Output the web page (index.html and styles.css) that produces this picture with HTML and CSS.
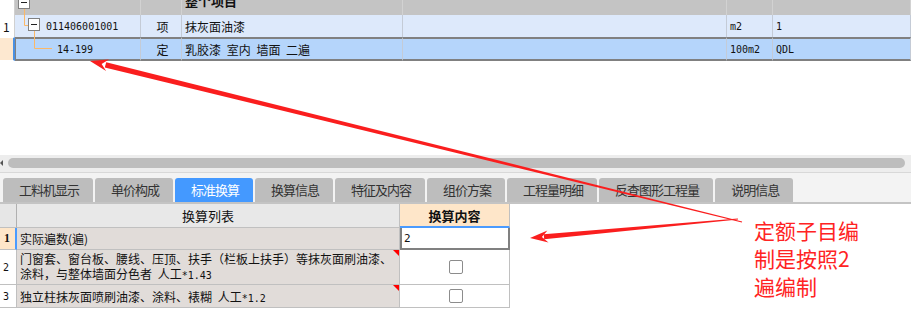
FILE: index.html
```html
<!DOCTYPE html>
<html lang="zh-CN">
<head>
    <meta charset="UTF-8">
    <title>标准换算</title>
    <link rel="stylesheet" href="styles.css">
</head>
<body>
    <div class="screen">
        <!-- Upper grid: items and quota rows -->
        <div class="grid-top">
            <div class="trow thead">
                <div class="c c0"></div>
                <div class="c c1"></div>
                <div class="c c2"></div>
                <div class="c c3 strong">整个项目</div>
                <div class="c c4"></div>
                <div class="c c5"></div>
                <div class="c c6"></div>
            </div>
            <div class="trow item">
                <div class="c c0">1</div>
                <div class="c c1 lvl1"><span class="mono">011406001001</span></div>
                <div class="c c2 center">项</div>
                <div class="c c3">抹灰面油漆</div>
                <div class="c c4"></div>
                <div class="c c5"><span class="mono">m2</span></div>
                <div class="c c6"><span class="mono">1</span></div>
            </div>
            <div class="trow item sel">
                <div class="c c0"></div>
                <div class="c c1 lvl2"><span class="mono">14-199</span></div>
                <div class="c c2 center">定</div>
                <div class="c c3">乳胶漆 室内 墙面 二遍</div>
                <div class="c c4"></div>
                <div class="c c5"><span class="mono">100m2</span></div>
                <div class="c c6"><span class="mono">QDL</span></div>
            </div>

            <!-- tree connectors -->
            <svg class="tree" width="60" height="70" viewBox="0 0 60 70">
                <path d="M24.5 16.5 V33.5 H28" stroke="#fbb868" fill="none"/>
                <path d="M34.5 39 V56.5 H52" stroke="#fbb868" fill="none"/>
                <rect x="18.5" y="4.5" width="11" height="12" fill="#fff" stroke="#808080"/>
                <path d="M21 10.5 H27" stroke="#222"/>
                <rect x="28.5" y="26.5" width="11" height="12" fill="#fff" stroke="#808080"/>
                <path d="M31 32.5 H37" stroke="#222"/>
            </svg>
        </div>

        <div class="blank"></div>

        <div class="hscroll">
            <span class="hs-arrow"></span>
            <div class="hs-thumb"></div>
        </div>

        <div class="tabbar">
            <div class="tab">工料机显示</div>
            <div class="tab">单价构成</div>
            <div class="tab active">标准换算</div>
            <div class="tab">换算信息</div>
            <div class="tab">特征及内容</div>
            <div class="tab">组价方案</div>
            <div class="tab">工程量明细</div>
            <div class="tab">反查图形工程量</div>
            <div class="tab">说明信息</div>
        </div>

        <!-- Lower grid: conversion list -->
        <div class="grid-bottom">
            <div class="brow bhead">
                <div class="b b0"></div>
                <div class="b b1 center">换算列表</div>
                <div class="b b2 center strong">换算内容</div>
            </div>
            <div class="brow cur">
                <div class="b b0 serif">1</div>
                <div class="b b1">实际遍数(遍)</div>
                <div class="b b2"><span class="mono">2</span></div>
            </div>
            <div class="brow tall">
                <div class="b b0"><span class="mono">2</span></div>
                <div class="b b1 flag"><span class="txt">门窗套、窗台板、腰线、压顶、扶手（栏板上扶手）等抹灰面刷油漆、<br>涂料，与整体墙面分色者 人工<span class="mono">*1.43</span></span></div>
                <div class="b b2 center"><span class="check"></span></div>
            </div>
            <div class="brow">
                <div class="b b0"><span class="mono">3</span></div>
                <div class="b b1 flag"><span class="txt">独立柱抹灰面喷刷油漆、涂料、裱糊 人工<span class="mono">*1.2</span></span></div>
                <div class="b b2 center"><span class="check"></span></div>
            </div>
        </div>

        <!-- annotation -->
        <div class="note">定额子目编<br>制是按照2<br>遍编制</div>
        <svg class="arrows" width="911" height="316" viewBox="0 0 911 316">
            <polygon points="742.1,221.5 106.2,62.2 104.8,67.4 741.9,222.5" fill="#fa1e1e"/>
            <polygon points="90,61 108.9,59.5 101.6,63.9 106.1,71.1" fill="#fa1e1e"/>
            <polygon points="737.9,218.5 543.7,234.2 544.2,239.2 738.1,219.5" fill="#fa1e1e"/>
            <polygon points="530,238 547.4,230.4 541.9,236.9 548.5,242.4" fill="#fa1e1e"/>
        </svg>
    </div>
</body>
</html>
```

FILE: styles.css
```css
/* Reset */
* {
    margin: 0;
    padding: 0;
    box-sizing: border-box;
}

body {
    font-family: "Noto Sans CJK SC", "DejaVu Sans", sans-serif;
    font-size: 12px;
    color: #111;
    background: #fff;
}

.screen {
    position: relative;
    width: 911px;
    height: 316px;
    overflow: hidden;
}

.mono {
    font-family: "DejaVu Sans Mono", "Liberation Mono", monospace;
    font-size: 10px;
    word-spacing: 0;
}

.center {
    justify-content: center;
}

.strong {
    font-weight: bold;
}

/* Upper grid */
.grid-top {
    position: relative;
    margin-top: -8px;
}

.trow {
    display: grid;
    grid-template-columns: 15px 126px 41px 221px 324px 46px 138px;
}

.c {
    display: flex;
    align-items: center;
    padding-left: 3px;
    border-right: 1px solid #c4cbd6;
    white-space: nowrap;
    overflow: hidden;
    word-spacing: 3px;
}

.thead {
    height: 23px;
}

.thead .c {
    background: #c4c4c4;
    border-right-color: #d2d2d2;
    align-items: flex-start;
    line-height: 18px;
    font-size: 13px;
}

.thead .c0 {
    background: #fff;
    border-right-color: #d0d0d0;
}

.item {
    height: 22px;
}

.item .c {
    background: #dde9fb;
}

.item .c0 {
    background: #fff;
    border-right-color: #d0d0d0;
}

.lvl1 {
    padding-left: 31px;
}

.lvl2 {
    padding-left: 41px;
}

.sel {
    height: 24px;
}

.sel .c {
    background: #b5d5fb;
    border-top: 2px solid #808080;
    border-bottom: 2px solid #808080;
}

.sel .c0 {
    background: #fde8d0;
    border-top: 1px solid #fff;
    border-bottom: 1px solid #fff;
    border-right: 2px solid #4a90e2;
}

.sel .c1 {
    border-left: 1px solid #808080;
}

.tree {
    position: absolute;
    left: 0;
    top: 0;
}

.blank {
    height: 94px;
}

/* Horizontal scrollbar */
.hscroll {
    position: relative;
    height: 18px;
    background: #ededed;
    border-bottom: 1px solid #d8d8d8;
    padding: 3px 6px 0 8px;
}

.hs-arrow {
    position: absolute;
    left: 0;
    top: 5px;
    border-top: 3px solid transparent;
    border-bottom: 3px solid transparent;
    border-right: 3px solid #555;
}

.hs-thumb {
    height: 10px;
    background: #bdbdbd;
    border-radius: 5px;
}

/* Tabs */
.tabbar {
    display: flex;
    align-items: flex-end;
    gap: 2px;
    height: 31px;
    padding-left: 3px;
    background: #f3f3f3;
    border-bottom: 2px solid #c4c4c4;
}

.tab {
    height: 24px;
    line-height: 24px;
    padding: 0 14px 0 16px;
    font-size: 13px;
    letter-spacing: -1px;
    color: #333;
    background: #bdbdbd;
    border-radius: 3px 3px 0 0;
    white-space: nowrap;
}

.tab.active {
    background: #4499ff;
    color: #fff;
}

/* Lower grid */
.brow {
    display: grid;
    grid-template-columns: 17px 383px 110px;
    height: 23px;
}

.b {
    display: flex;
    align-items: center;
    padding-left: 3px;
    border-right: 1px solid #c0c0c0;
    border-bottom: 1px solid #c0c0c0;
    white-space: nowrap;
    word-spacing: 3px;
}

.b1 {
    background: #e1dcd9;
}

.b2 {
    background: #fff;
}

.bhead {
    height: 24px;
}

.bhead .b0 {
    background: #e6e6e6;
    border-right-color: #b0b0b0;
}

.bhead .b1 {
    background: #e8e8e8;
    font-size: 13px;
    padding-left: 0;
}

.bhead .b2 {
    background: #fee6c9;
    border-bottom: 2px solid #4a9bff;
    padding-left: 0;
    font-size: 13px;
}

.cur {
    height: 22px;
}

.cur .b0 {
    background: #fee6c9;
    border-right: 2px solid #4a9bff;
    padding-left: 4px;
}

.serif {
    font-family: "Liberation Serif", serif;
    font-weight: bold;
    font-size: 12px;
}

.cur .b2 {
    border: 2px solid #808080;
    border-top: none;
    padding-left: 2px;
}

.cur .b2 .mono {
    font-size: 11px;
}

.tall {
    height: 35px;
}

.tall .b1 {
    line-height: 15px;
}

.flag {
    position: relative;
}

.flag::after {
    content: "";
    position: absolute;
    top: 0;
    right: 0;
    border-top: 6px solid #f00;
    border-left: 6px solid transparent;
}

.check {
    width: 14px;
    height: 14px;
    border: 1px solid #8c8c8c;
    border-radius: 2px;
    background: #fff;
}

/* Annotation overlay */
.note {
    position: absolute;
    left: 754px;
    top: 216px;
    font-size: 21px;
    line-height: 28px;
    color: #ff2323;
}

.arrows {
    position: absolute;
    left: 0;
    top: 0;
    pointer-events: none;
}
```
